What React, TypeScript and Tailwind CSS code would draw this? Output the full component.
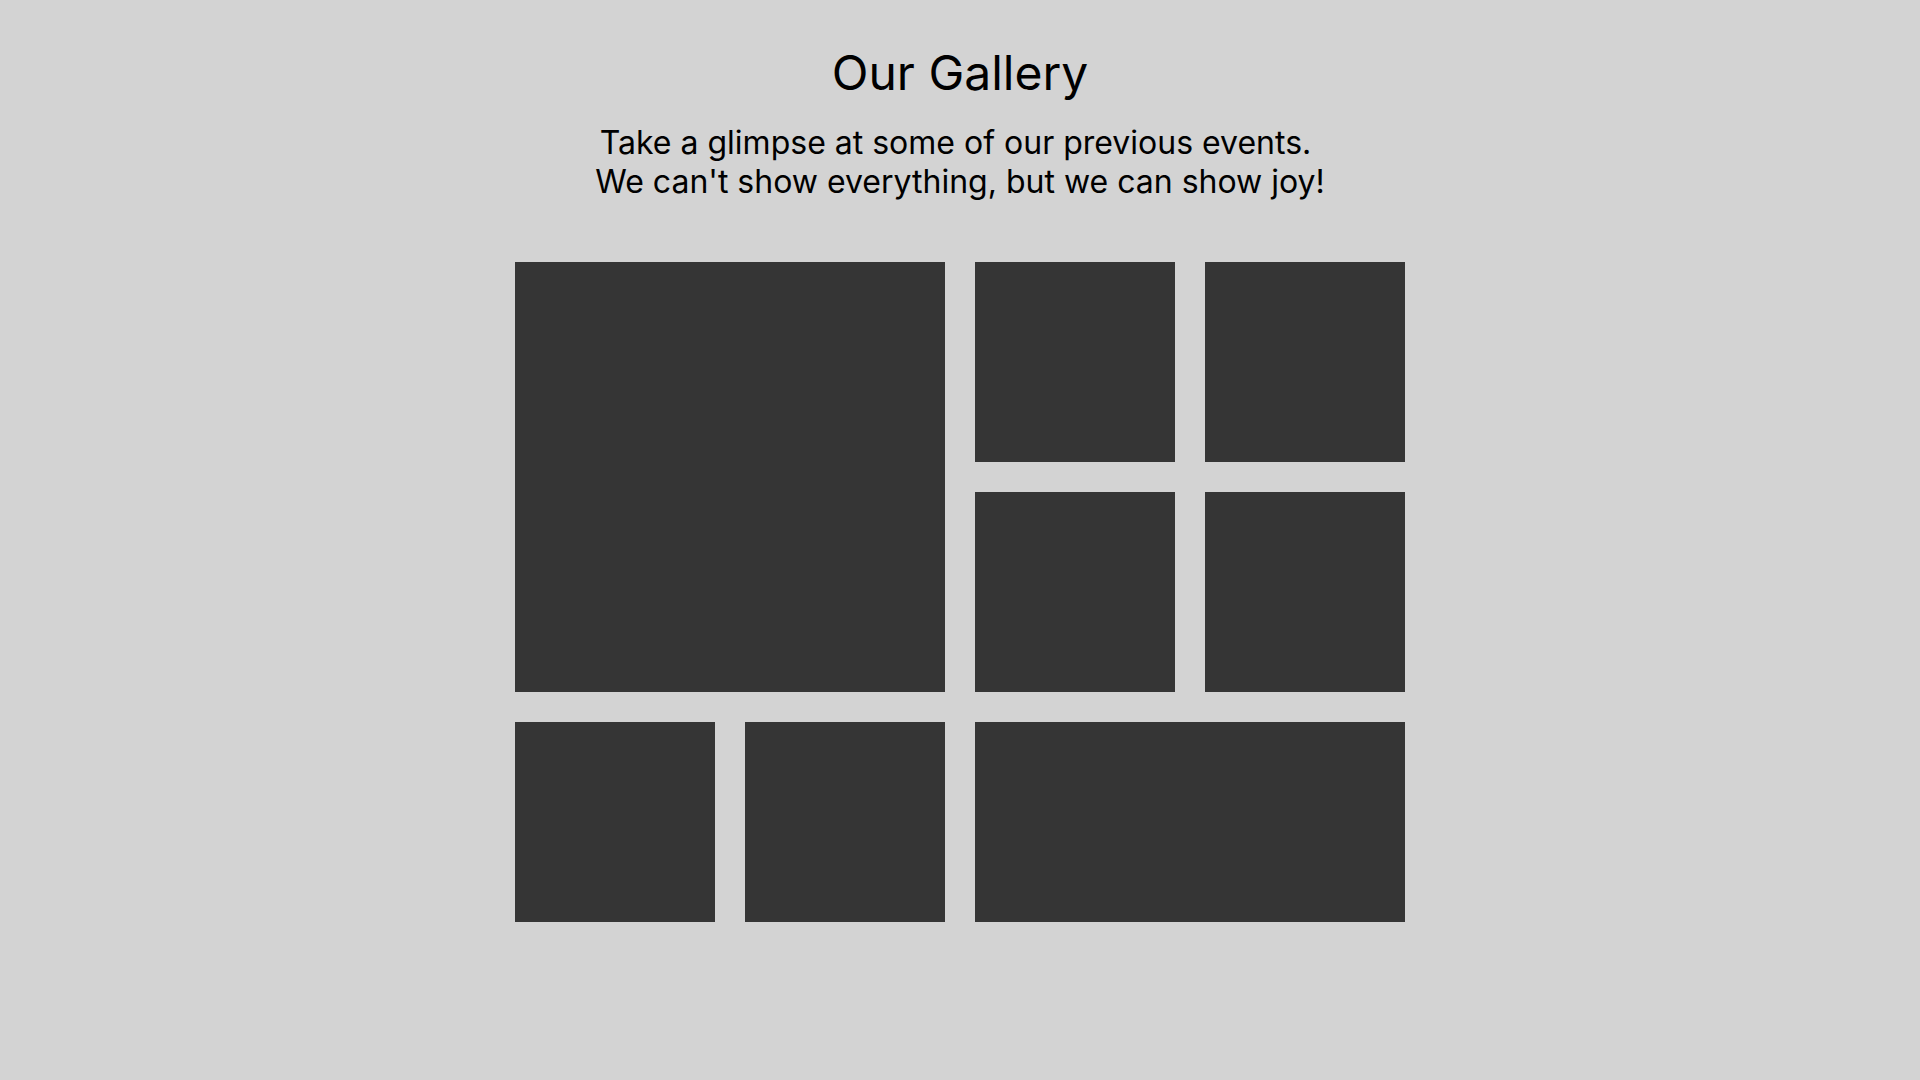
export default function App() {
  const cell = 'bg-[#353535]';

  return (
    <div className="min-h-screen bg-[#d3d3d3] text-black font-['Inter',sans-serif] flex flex-col items-center pt-[44px]">
      <h1 className="text-[48px] leading-[58px] font-normal">Our Gallery</h1>
      <p className="mt-[21px] text-[32px] leading-[39px] text-center">
        Take a glimpse at some of our previous events.{'\u00a0'}
        <br />
        We can't show everything, but we can show joy!
      </p>

      <div className="mt-[61px] grid grid-cols-[repeat(4,200px)] grid-rows-[repeat(3,200px)] gap-[30px]">
        <div className={`${cell} col-span-2 row-span-2`} />
        <div className={cell} />
        <div className={cell} />
        <div className={cell} />
        <div className={cell} />
        <div className={cell} />
        <div className={cell} />
        <div className={`${cell} col-span-2`} />
      </div>
    </div>
  );
}
